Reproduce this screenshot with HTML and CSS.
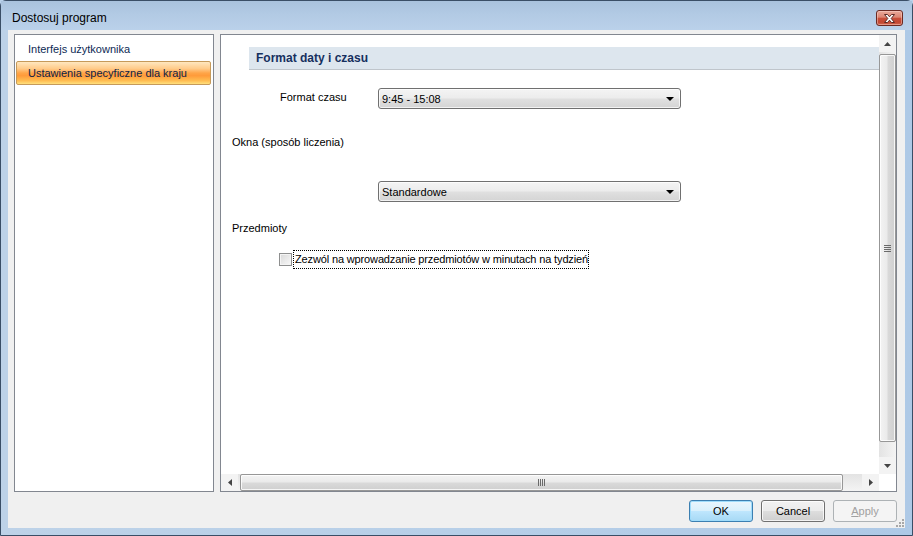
FILE: index.html
```html
<!DOCTYPE html>
<html lang="pl">
<head>
<meta charset="utf-8">
<title>Dostosuj program</title>
<link rel="stylesheet" href="styles.css">
</head>
<body>
<div class="window">
  <div class="titlebar">
    <span class="title">Dostosuj program</span>
    <button class="close" type="button" aria-label="Zamknij">
      <svg width="17" height="11" viewBox="0 0 17 11">
        <path d="M3.5 1.5 H6.5 L8.5 3.8 L10.5 1.5 H13.5 L10.2 5.5 L13.5 9.5 H10.5 L8.5 7.2 L6.5 9.5 H3.5 L6.8 5.5 Z" fill="#ffffff" stroke="#5b2a25" stroke-width="1" stroke-linejoin="round"/>
      </svg>
    </button>
  </div>
  <div class="client">
    <div class="panels">
      <ul class="nav">
        <li class="nav-item">Interfejs użytkownika</li>
        <li class="nav-item selected">Ustawienia specyficzne dla kraju</li>
      </ul>
      <div class="settings">
        <div class="scroll-content">
          <div class="section-header">Format daty i czasu</div>
          <div class="row time-row">
            <span class="row-label">Format czasu</span>
            <div class="combo"><span>9:45 - 15:08</span><i class="combo-arrow"></i></div>
          </div>
          <div class="group-label okna">Okna (sposób liczenia)</div>
          <div class="row combo-only">
            <div class="combo"><span>Standardowe</span><i class="combo-arrow"></i></div>
          </div>
          <div class="group-label przedmioty">Przedmioty</div>
          <label class="check-row">
            <span class="checkbox"></span>
            <span class="check-label">Zezwól na wprowadzanie przedmiotów w minutach na tydzień</span>
          </label>
        </div>
        <div class="vscroll">
          <div class="sb-arrow"><svg width="7" height="4" viewBox="0 0 7 4"><path d="M3.5 0 L7 4 H0 Z" fill="#444"/></svg></div>
          <div class="vtrack">
            <div class="vthumb">
              <svg width="7" height="7" viewBox="0 0 7 7"><path d="M0 0.5 H7 M0 2.5 H7 M0 4.5 H7 M0 6.5 H7" stroke="#6a6a6a" stroke-width="1"/></svg>
            </div>
          </div>
          <div class="sb-arrow"><svg width="7" height="4" viewBox="0 0 7 4"><path d="M0 0 H7 L3.5 4 Z" fill="#444"/></svg></div>
        </div>
        <div class="hscroll">
          <div class="sb-arrow h"><svg width="4" height="7" viewBox="0 0 4 7"><path d="M4 0 V7 L0 3.5 Z" fill="#444"/></svg></div>
          <div class="htrack">
            <div class="hthumb">
              <svg width="7" height="7" viewBox="0 0 7 7"><path d="M0.5 0 V7 M2.5 0 V7 M4.5 0 V7 M6.5 0 V7" stroke="#6a6a6a" stroke-width="1"/></svg>
            </div>
          </div>
          <div class="sb-arrow h"><svg width="4" height="7" viewBox="0 0 4 7"><path d="M0 0 V7 L4 3.5 Z" fill="#444"/></svg></div>
        </div>
        <div class="corner"></div>
      </div>
    </div>
    <div class="buttons">
      <button class="btn default" type="button">OK</button>
      <button class="btn" type="button">Cancel</button>
      <button class="btn disabled" type="button" disabled><u>A</u>pply</button>
    </div>
    <svg class="grip" width="8" height="8" viewBox="0 0 8 8">
      <g fill="#a8a8a8">
        <rect x="6" y="0" width="2" height="2"/>
        <rect x="3" y="3" width="2" height="2"/><rect x="6" y="3" width="2" height="2"/>
        <rect x="0" y="6" width="2" height="2"/><rect x="3" y="6" width="2" height="2"/><rect x="6" y="6" width="2" height="2"/>
      </g>
    </svg>
  </div>
</div>
</body>
</html>
```

FILE: styles.css
```css
* { box-sizing: border-box; }

html, body {
  margin: 0;
  padding: 0;
}

body {
  width: 913px;
  height: 536px;
  overflow: hidden;
  font-family: "Liberation Sans", Arial, sans-serif;
  font-size: 11px;
  color: #000;
  background: #b9d1ea;
}

.window {
  width: 913px;
  height: 536px;
  display: flex;
  flex-direction: column;
  border: 1px solid #3a4e66;
  border-radius: 6px 6px 0 0;
  padding: 0 7px 7px 7px;
  background: linear-gradient(90deg, #bdd2e8 0%, #b7cfe8 50%, #aec9e6 100%);
}

.titlebar {
  height: 29px;
  flex: none;
  display: flex;
  align-items: flex-start;
  background: linear-gradient(180deg, #a9c2dd 0%, #b2cae4 45%, #bad1ea 100%);
  margin: 0 -7px;
  padding: 0 9px 0 11px;
}

.title {
  font-size: 12px;
  line-height: 14px;
  margin-top: 10px;
  color: #000;
}

.close {
  margin-left: auto;
  margin-top: 9px;
  width: 27px;
  height: 16px;
  padding: 0;
  border: 1px solid #6b2a23;
  border-radius: 3px;
  background: linear-gradient(180deg, #e9a99a 0%, #dc8572 45%, #c9503b 50%, #c24631 80%, #d2684f 100%);
  box-shadow: inset 0 0 0 1px rgba(255, 220, 210, 0.45);
  display: flex;
  align-items: center;
  justify-content: center;
}

.close svg { display: block; }

.client {
  position: relative;
  flex: 1;
  display: flex;
  flex-direction: column;
  background: #f0f0f0;
  padding: 4px 8px 0 6px;
}

.panels {
  height: 458px;
  display: flex;
  gap: 6px;
}

.nav {
  width: 200px;
  margin: 0;
  padding: 2px 2px 0 1px;
  list-style: none;
  background: #fff;
  border: 1px solid #828790;
}

.nav-item {
  height: 24px;
  line-height: 22px;
  padding-left: 11px;
  border: 1px solid transparent;
  color: #0d2a55;
  white-space: nowrap;
}

.nav-item.selected {
  color: #0d2347;
  border-color: #c69a5a;
  border-radius: 2px;
  background: linear-gradient(180deg, #ffe7bf 0%, #ffcb8a 30%, #ffa548 50%, #ff9b3a 62%, #ffbd52 85%, #ffe07e 100%);
}

.settings {
  flex: 1;
  display: grid;
  grid-template-columns: 1fr 17px;
  grid-template-rows: 1fr 17px;
  background: #fff;
  border: 1px solid #828790;
  min-width: 0;
}

.scroll-content {
  padding-top: 12px;
  display: flex;
  flex-direction: column;
  overflow: hidden;
}

.section-header {
  margin-left: 28px;
  height: 23px;
  line-height: 22px;
  padding-left: 7px;
  background: #dde6ee;
  border-bottom: 1px solid #bfc5cb;
  font-weight: bold;
  font-size: 12px;
  color: #16305e;
}

.row {
  display: flex;
  align-items: center;
}

.time-row {
  margin-top: 18px;
  padding-left: 59px;
}

.row-label {
  width: 98px;
  margin-top: -3px;
}

.combo {
  width: 303px;
  height: 21px;
  display: flex;
  align-items: center;
  justify-content: space-between;
  padding: 1px 6px 0 3px;
  border: 1px solid #707070;
  border-radius: 3px;
  background: linear-gradient(180deg, #f4f4f4 0%, #ececec 48%, #e0e0e0 52%, #d4d4d4 100%);
  box-shadow: inset 0 0 0 1px rgba(255,255,255,0.7);
}

.combo-arrow {
  width: 0;
  height: 0;
  border-left: 4px solid transparent;
  border-right: 4px solid transparent;
  border-top: 4px solid #000;
}

.group-label {
  padding-left: 11px;
  line-height: 13px;
}

.okna { margin-top: 27px; }

.combo-only {
  margin-top: 32px;
  padding-left: 157px;
}

.przedmioty { margin-top: 20px; }

.check-row {
  margin-top: 16px;
  margin-left: 58px;
  display: flex;
  align-items: center;
  gap: 2px;
}

.checkbox {
  width: 13px;
  height: 13px;
  border: 1px solid #8e8f8f;
  background: linear-gradient(135deg, #d8d8d8 0%, #ececec 60%, #f8f8f8 100%);
  box-shadow: inset 0 0 0 1px #f4f4f4;
}

.check-label {
  outline: 1px dotted #000;
  outline-offset: 0;
  padding: 2px 0 2px 1px;
  line-height: 13px;
  letter-spacing: -0.14px;
}

.vscroll {
  display: flex;
  flex-direction: column;
  background: #f3f3f3;
}

.sb-arrow {
  flex: none;
  height: 17px;
  display: flex;
  align-items: center;
  justify-content: center;
}

.sb-arrow.h {
  width: 17px;
  height: 17px;
}

.vtrack {
  flex: 1;
  padding: 2px 0 15px 0;
  display: flex;
  background: linear-gradient(90deg, #e3e3e3 0%, #f4f4f4 100%);
}

.vthumb {
  flex: 1;
  border: 1px solid #979797;
  border-radius: 2px;
  background: linear-gradient(90deg, #f3f3f3 0%, #ebebeb 45%, #d9d9d9 55%, #cfcfcf 100%);
  box-shadow: inset 0 0 0 1px rgba(255,255,255,0.8);
  display: flex;
  align-items: center;
  justify-content: center;
}

.hscroll {
  display: flex;
  background: #f3f3f3;
}

.htrack {
  flex: 1;
  padding: 0 19px 0 2px;
  display: flex;
  background: linear-gradient(180deg, #e3e3e3 0%, #f4f4f4 100%);
}

.hthumb {
  flex: 1;
  border: 1px solid #979797;
  border-radius: 2px;
  background: linear-gradient(180deg, #f3f3f3 0%, #ebebeb 45%, #d9d9d9 55%, #cfcfcf 100%);
  box-shadow: inset 0 0 0 1px rgba(255,255,255,0.8);
  display: flex;
  align-items: center;
  justify-content: center;
}

.corner { background: #fff; }

.buttons {
  margin-top: 8px;
  display: flex;
  justify-content: flex-end;
  gap: 8px;
}

.btn {
  width: 64px;
  height: 22px;
  padding: 0;
  font-family: "Liberation Sans", Arial, sans-serif;
  font-size: 11px;
  color: #000;
  border: 1px solid #707070;
  border-radius: 3px;
  background: linear-gradient(180deg, #f2f2f2 0%, #ebebeb 48%, #dddddd 52%, #cfcfcf 100%);
  box-shadow: inset 0 0 0 1px rgba(255,255,255,0.75);
}

.btn.default {
  border-color: #3c7fb1;
  background: linear-gradient(180deg, #eaf6fd 0%, #d9f0fc 48%, #bee6fd 52%, #a7d9f5 100%);
  box-shadow: inset 0 0 0 1px #9fdcfb;
}

.btn.disabled {
  color: #a0a0a0;
  border-color: #adb2b5;
  background: #f4f4f4;
  box-shadow: none;
}

.grip {
  position: absolute;
  right: 1px;
  bottom: 1px;
}
```
